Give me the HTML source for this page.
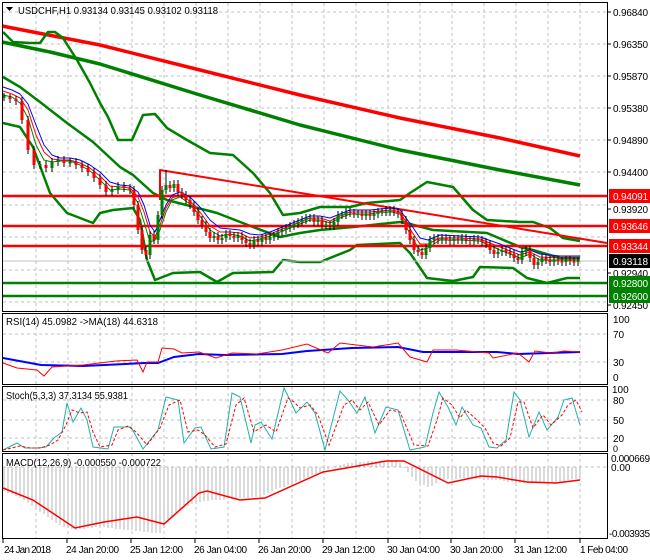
<!DOCTYPE html>
<html><head><meta charset="utf-8">
<style>
html,body{margin:0;padding:0;background:#fff;}
svg{display:block;font-family:"Liberation Sans",sans-serif;font-size:10px;}
</style></head>
<body>
<svg width="650" height="560" viewBox="0 0 650 560" xmlns="http://www.w3.org/2000/svg">
<rect width="650" height="560" fill="#fff"/>
<!-- grid -->
<g fill="none" stroke="#c0c0c0" stroke-dasharray="3,3" stroke-width="1">
<path d="M36 3V538M68 3V538M100 3V538M132 3V538M164 3V538M196 3V538M228 3V538M260 3V538M292 3V538M324 3V538M356 3V538M388 3V538M420 3V538M452 3V538M484 3V538M516 3V538M548 3V538M580 3V538"/>
<path d="M3 12H607M3 44H607M3 76H607M3 108H607M3 140H607M3 172H607M3 205H607M3 237H607M3 270H607M3 302H607"/>
<path d="M3 334H607M3 362H607M3 400H607M3 420H607M3 438H607M3 467H607"/>
</g>

<!-- main panel lines -->
<g fill="none" stroke-linejoin="round">
<polyline points="2,26 100,45 200,70 300,95 400,118 500,138 580,156" stroke="#ff0000" stroke-width="3.5"/>
<polyline points="2,42 50,52 100,64 200,95 300,125 400,150 500,170 580,185" stroke="#008000" stroke-width="3.5"/>
<polyline points="3,32 13,42 30,43 40,43 48,32 55,32 63,38 77,60 90,83 100,103 108,117 118,140 132,140 143,115 155,114 167,128 187,140 210,153 233,155 253,173 270,193 283,215 300,213 320,207 350,207 367,203 400,200 410,193 427,182 453,187 473,210 487,220 520,222 533,222 550,228 563,238 580,241" stroke="#008000" stroke-width="2.5"/>
<polyline points="3,77 20,87 40,102 67,123 93,142 120,167 133,175 153,193 167,200 217,213 253,227 280,237 300,233 320,230 353,227 400,222 410,224 433,230 487,233 520,247 533,250 560,258 580,258" stroke="#008000" stroke-width="2.5"/>
<polyline points="3,123 20,127 33,147 50,193 67,213 93,223 100,213 113,210 133,208 140,220 147,260 155,280 173,273 200,272 217,282 233,273 273,272 283,260 300,262 320,262 350,250 357,245 400,243 410,253 427,278 453,281 473,277 480,267 513,268 527,278 547,283 567,278 580,278" stroke="#008000" stroke-width="2.5"/>
<line x1="2" y1="196" x2="607" y2="196" stroke="#ff0000" stroke-width="2.5"/>
<line x1="2" y1="226" x2="607" y2="226" stroke="#ff0000" stroke-width="2.5"/>
<line x1="2" y1="246" x2="607" y2="246" stroke="#ff0000" stroke-width="2.5"/>
<line x1="2" y1="261" x2="607" y2="261" stroke="#c0c0c0" stroke-width="1"/>
<line x1="2" y1="283" x2="607" y2="283" stroke="#008000" stroke-width="2.5"/>
<line x1="2" y1="296" x2="607" y2="296" stroke="#008000" stroke-width="2.5"/>
<polyline points="160,200 160,170 607,243" stroke="#ff0000" stroke-width="2"/>
<!-- thin MAs -->
<polyline points="3,87 12,90 20,94 28,104 36,125 44,145 52,155 60,158 70,158 80,160 90,165 100,172 110,182 120,185 130,186 138,192 144,205 150,225 155,232 160,220 166,205 172,195 180,192 190,197 200,207 210,220 220,228 230,229 240,230 250,234 260,235 270,232 280,228 290,224 300,220 310,216 320,216 330,218 340,214 350,210 360,210 370,210 380,209 392,208 400,210 406,218 412,226 420,238 428,240 440,235 460,236 480,237 500,244 520,252 530,250 540,254 560,256 580,256" stroke="#0000ff" stroke-width="1"/>
<polyline points="3,91 12,94 20,98 28,110 36,135 44,152 52,159 60,160 70,160 80,163 90,168 100,176 110,186 120,187 130,188 138,197 144,212 150,232 155,237 160,225 166,208 172,198 180,195 190,201 200,212 210,226 220,232 230,232 240,233 250,238 260,237 270,234 280,230 290,226 300,222 310,218 320,218 330,221 340,216 350,212 360,212 370,212 380,211 392,210 400,212 406,222 412,232 420,244 428,244 440,238 460,238 480,239 500,247 520,255 530,252 540,257 560,258 580,258" stroke="#ff0000" stroke-width="1"/>
<polyline points="3,95 12,97 20,103 28,118 36,145 44,160 52,162 60,161 70,161 80,165 90,171 100,180 110,190 120,189 130,190 138,203 144,222 150,242 155,240 160,230 166,212 172,200 180,197 190,204 200,216 210,230 220,236 230,234 240,236 250,241 260,239 270,236 280,232 290,228 300,224 310,220 320,220 330,223 340,218 350,214 360,214 370,214 380,212 392,212 400,214 406,226 412,238 420,250 428,248 440,240 460,240 480,241 500,250 520,258 530,254 540,260 560,260 580,260" stroke="#008000" stroke-width="1"/>
</g>

<!-- candles: wicks -->
<path fill="none" stroke="#000" stroke-width="1" d="M4 93V101M10 94V103M16 96V105M22 97V124M28 116V154M34 146V169M40 161V169M46 161V172M52 158V172M58 156V166M64 156V167M70 158V167M76 158V169M82 161V172M88 164V176M94 168V182M100 174V189M106 181V196M112 186V196M118 182V194M124 182V192M130 184V194M134 186V209M138 201V234M142 226V254M146 246V259M150 231V259M154 231V244M158 211V244M162 186V219M166 170V194M170 181V192M174 180V192M178 180V196M182 188V199M186 191V204M190 196V209M194 201V216M198 208V224M202 216V229M206 221V236M210 228V242M214 232V242M218 232V244M222 234V244M226 230V242M230 230V240M234 232V242M238 232V242M242 232V244M246 236V247M250 239V249M254 236V249M258 236V246M262 234V246M266 234V244M270 233V244M274 232V241M278 228V240M282 226V236M286 224V234M290 222V232M294 220V230M298 218V228M302 216V226M306 214V224M310 214V222M314 214V226M318 216V226M322 216V229M326 221V229M330 221V230M334 218V230M338 211V226M342 211V219M346 208V219M350 208V217M354 209V218M358 210V218M362 210V220M366 210V220M370 210V220M374 210V220M378 208V218M382 208V216M386 206V216M390 206V216M394 206V216M398 208V218M402 210V224M406 216V234M410 226V244M414 236V254M418 246V256M422 248V259M426 244V259M430 236V252M434 234V244M438 234V244M442 234V244M446 234V244M450 236V245M454 235V245M458 235V244M462 234V244M466 234V244M470 236V245M474 235V245M478 235V244M482 236V246M486 238V248M490 240V254M494 246V258M498 248V258M502 246V256M506 246V256M510 248V258M514 250V262M518 254V264M522 248V264M526 246V256M530 246V262M534 254V269M538 258V269M542 254V266M546 254V264M550 256V266M554 256V266M558 256V265M562 257V266M566 256V266M570 256V265M574 257V266M578 257V266"/>
<!-- red bodies -->
<path fill="none" stroke="#ff0000" stroke-width="3" d="M10 97V99M16 99V101M22 101V120M28 120V150M34 150V165M46 165V168M64 160V163M76 162V165M82 165V168M88 168V172M94 172V178M100 178V185M106 185V192M124 186V188M130 188V190M134 190V205M138 205V230M142 230V250M146 250V255M154 235V240M170 185V188M178 184V192M182 192V195M186 195V200M190 200V205M194 205V212M198 212V220M202 220V225M206 225V232M210 232V238M218 236V240M230 234V236M234 236V238M242 236V240M246 240V243M250 243V245M258 240V242M266 238V240M314 218V222M322 220V225M330 225V226M350 212V213M354 213V214M362 214V216M370 214V216M394 210V212M398 212V214M402 214V220M406 220V230M410 230V240M414 240V250M418 250V252M422 252V255M438 238V240M446 238V240M450 240V241M458 239V240M466 238V240M470 240V241M478 239V240M482 240V242M486 242V244M490 244V250M494 250V254M506 250V252M510 252V254M514 254V258M518 258V260M530 250V258M534 258V265M546 258V260M550 260V262M558 260V261.5M562 261V262.5M570 260V261.5M574 261V262.5"/>
<!-- green bodies -->
<path fill="none" stroke="#008000" stroke-width="3" d="M4 96V98M40 164V166M52 162V168M58 160V162M70 162V163.5M112 190V192M118 186V190M150 235V255M158 215V240M162 190V215M166 185V190M174 184V188M214 236V238M222 238V240M226 234V238M238 236V238M254 240V245M262 238V242M270 237V240M274 236V237.5M278 232V236M282 230V232M286 228V230M290 226V228M294 224V226M298 222V224M302 220V222M306 218V220M310 217.5V219M318 220V222M326 224.5V226M334 222V226M338 215V222M342 214.5V216M346 212V215M358 213.5V215M366 214V216M374 214V216M378 212V214M382 211.5V213M386 211.5V213M390 210V212M426 248V255M430 240V248M434 238V240M442 238V240M454 239V241M462 238V240M474 239V241M498 252V254M502 250V252M522 252V260M526 250V252M538 262V265M542 258V262M554 260V262M566 260V262M578 261V262"/>

<!-- indicator lines -->
<g fill="none">
<polyline points="3,358 41,365 83,366 145,363 158,363 174,357 199,354 224,355 282,354 307,351 352,348 398,347 423,352 497,352 518,354 580,352" stroke="#0000ff" stroke-width="2"/>
<polyline points="3,363 17,368 37,370 44,376 52,367 83,365 116,361 137,360 143,372 147,362 158,362 162,348 174,349 182,353 199,352 216,358 232,353 257,354 282,350 307,344 328,353 340,343 373,347 398,343 410,357 427,362 433,350 456,350 489,353 493,358 518,353 529,362 535,351 551,353 564,351 580,352" stroke="#ff0000" stroke-width="1"/>
<polyline points="3,450 17,443 25,448 37,448 46,447 54,438 62,432 67,403 73,422 81,408 87,420 93,447 108,449 114,427 124,427 131,427 143,449 158,430 166,397 178,400 184,443 195,428 201,427 211,449 224,447 232,393 240,397 251,443 255,425 261,422 272,439 284,388 290,400 296,413 307,402 315,413 325,450 340,391 348,400 357,413 365,397 375,433 386,407 398,410 410,450 425,447 433,413 439,392 448,407 456,425 462,407 473,425 481,428 489,447 497,448 506,440 514,392 520,400 529,437 539,412 547,430 558,417 564,400 572,398 580,425" stroke="#20b2aa" stroke-width="1"/>
<polyline points="3,450 20,446 30,448 40,448 50,445 58,440 66,425 72,410 80,413 87,412 93,432 100,447 112,445 118,430 128,426 136,432 147,445 160,428 169,405 180,400 188,432 198,430 205,435 215,447 226,444 236,405 244,398 254,432 260,428 266,425 276,432 288,398 294,402 300,408 310,405 318,415 329,445 344,405 352,400 360,410 368,402 379,425 390,410 400,412 414,445 428,446 437,420 443,398 452,405 460,418 466,410 477,420 485,428 493,443 501,446 510,438 518,402 524,402 533,428 543,415 551,425 562,415 568,405 576,400 582,412" stroke="#ff0000" stroke-width="1" stroke-dasharray="3,2"/>
<path stroke="#b4b4b4" stroke-width="1" d="M4 467V491M8 467V493M12 467V494M16 467V496M20 467V498M24 467V500M28 467V503M32 467V506M36 467V509M40 467V512M44 467V514M48 467V517M52 467V520M56 467V523M60 467V525M64 467V527M68 467V528M72 467V529M76 467V530M80 467V529M84 467V529M88 467V528M92 467V528M96 467V527M100 467V527M104 467V527M108 467V528M112 467V528M116 467V529M120 467V529M124 467V530M128 467V530M132 467V530M136 467V531M140 467V531M144 467V532M148 467V532M152 467V533M156 467V533M160 467V533M164 467V528M168 467V522M172 467V518M176 467V514M180 467V511M184 467V508M188 467V506M192 467V504M196 467V503M200 467V502M204 467V501M208 467V501M212 467V500M216 467V500M220 467V500M224 467V500M228 467V499M232 467V499M236 467V499M240 467V498M244 467V498M248 467V498M252 467V497M256 467V497M260 467V497M264 467V495M268 467V493M272 467V491M276 467V489M280 467V488M284 467V487M288 467V485M292 467V484M296 467V482M300 467V481M304 467V479M308 467V477M312 467V475M316 467V474M320 467V472M324 467V470M328 467V469M332 467V467.5M336 467V466M340 467V465M344 467V464M348 467V463M352 467V463M356 467V462M360 467V462M364 467V462M368 467V461M372 467V461M376 467V461M380 467V461M384 467V461M388 467V460M392 467V460M396 467V460M400 467V463M404 467V468M408 467V472M412 467V477M416 467V481M420 467V483M424 467V485M428 467V487M432 467V486M436 467V483M440 467V480M444 467V480M448 467V479M452 467V479M456 467V479M460 467V478M464 467V478M468 467V478M472 467V478M476 467V479M480 467V479M484 467V480M488 467V480M492 467V480M496 467V480M500 467V480M504 467V481M508 467V482M512 467V482M516 467V483M520 467V483M524 467V483M528 467V483M532 467V483M536 467V483M540 467V483M544 467V482M548 467V482M552 467V482M556 467V482M560 467V482M564 467V481M568 467V480M572 467V479M576 467V479M580 467V478"/>
<polyline points="3,488 33,500 75,528 104,522 137,517 164,524 199,493 207,491 240,500 265,498 323,472 352,467 386,461 404,461 448,483 481,476 497,477 527,482 556,483 580,480" stroke="#ff0000" stroke-width="1.5"/>
</g>

<!-- frames -->
<g fill="none" stroke="#000" stroke-width="1">
<rect x="2.5" y="2.5" width="605" height="309"/>
<rect x="2.5" y="313.5" width="605" height="71"/>
<rect x="2.5" y="386.5" width="605" height="65"/>
<rect x="2.5" y="453.5" width="605" height="85"/>
</g>
<path stroke="#000" d="M607 12H611M607 44H611M607 76H611M607 108H611M607 140H611M607 172H611M607 209H611M607 273H611M607 305H611M3 539V543M67 539V543M131 539V543M195 539V543M259 539V543M323 539V543M388 539V543M451 539V543M515 539V543M580 539V543"/>

<!-- header texts -->
<g fill="#000" font-size="10.5">
<path d="M6,7 L13,7 L9.5,11 Z"/>
<text x="18" y="14" textLength="200" lengthAdjust="spacingAndGlyphs">USDCHF,H1  0.93134 0.93145 0.93102 0.93118</text>
<text x="6" y="325" textLength="152" lengthAdjust="spacingAndGlyphs">RSI(14) 45.0982  -&gt;MA(18) 44.6318</text>
<text x="6" y="399" textLength="122" lengthAdjust="spacingAndGlyphs">Stoch(5,3,3) 37.3134 55.9381</text>
<text x="6" y="466" textLength="155" lengthAdjust="spacingAndGlyphs">MACD(12,26,9) -0.000550 -0.000722</text>
</g>

<!-- right axis -->
<g fill="#000">
<text x="613" y="16" textLength="35">0.96840</text>
<text x="613" y="48" textLength="35">0.96350</text>
<text x="613" y="80" textLength="35">0.95870</text>
<text x="613" y="112" textLength="35">0.95380</text>
<text x="613" y="144" textLength="35">0.94890</text>
<text x="613" y="176" textLength="35">0.94400</text>
<text x="613" y="213" textLength="35">0.93920</text>
<text x="613" y="277" textLength="35">0.92940</text>
<text x="613" y="309" textLength="35">0.92450</text>
</g>
<rect x="609" y="189" width="41" height="14" fill="#ff0000"/>
<text x="613" y="200" fill="#fff" textLength="35">0.94091</text>
<rect x="609" y="219" width="41" height="14" fill="#ff0000"/>
<text x="613" y="230" fill="#fff" textLength="35">0.93646</text>
<rect x="609" y="239" width="41" height="14" fill="#ff0000"/>
<text x="613" y="250" fill="#fff" textLength="35">0.93344</text>
<rect x="609" y="254" width="41" height="14" fill="#000"/>
<text x="613" y="265" fill="#fff" textLength="35">0.93118</text>
<rect x="609" y="276" width="41" height="14" fill="#008000"/>
<text x="613" y="287" fill="#fff" textLength="35">0.92800</text>
<rect x="609" y="289" width="41" height="14" fill="#008000"/>
<text x="613" y="300" fill="#fff" textLength="35">0.92600</text>

<g fill="#000">
<text x="613" y="323">100</text>
<text x="613" y="338">70</text>
<text x="613" y="366">30</text>
<text x="613" y="381">0</text>
<text x="612" y="393">100</text>
<text x="613" y="404">80</text>
<text x="613" y="424">50</text>
<text x="613" y="442">20</text>
<text x="613" y="452" font-size="9">0</text>
<text x="611" y="462" textLength="39">0.000669</text>
<text x="611" y="471">0.00</text>
<text x="609" y="537" textLength="41">-0.003935</text>
</g>

<!-- bottom axis -->
<g fill="#000">
<text x="4" y="553" textLength="47">24 Jan 2018</text>
<text x="66" y="553" textLength="53">24 Jan 20:00</text>
<text x="130" y="553" textLength="53">25 Jan 12:00</text>
<text x="194" y="553" textLength="53">26 Jan 04:00</text>
<text x="258" y="553" textLength="53">26 Jan 20:00</text>
<text x="322" y="553" textLength="53">29 Jan 12:00</text>
<text x="387" y="553" textLength="53">30 Jan 04:00</text>
<text x="450" y="553" textLength="53">30 Jan 20:00</text>
<text x="514" y="553" textLength="53">31 Jan 12:00</text>
<text x="580" y="553" textLength="48">1 Feb 04:00</text>
</g>
</svg>
</body></html>
